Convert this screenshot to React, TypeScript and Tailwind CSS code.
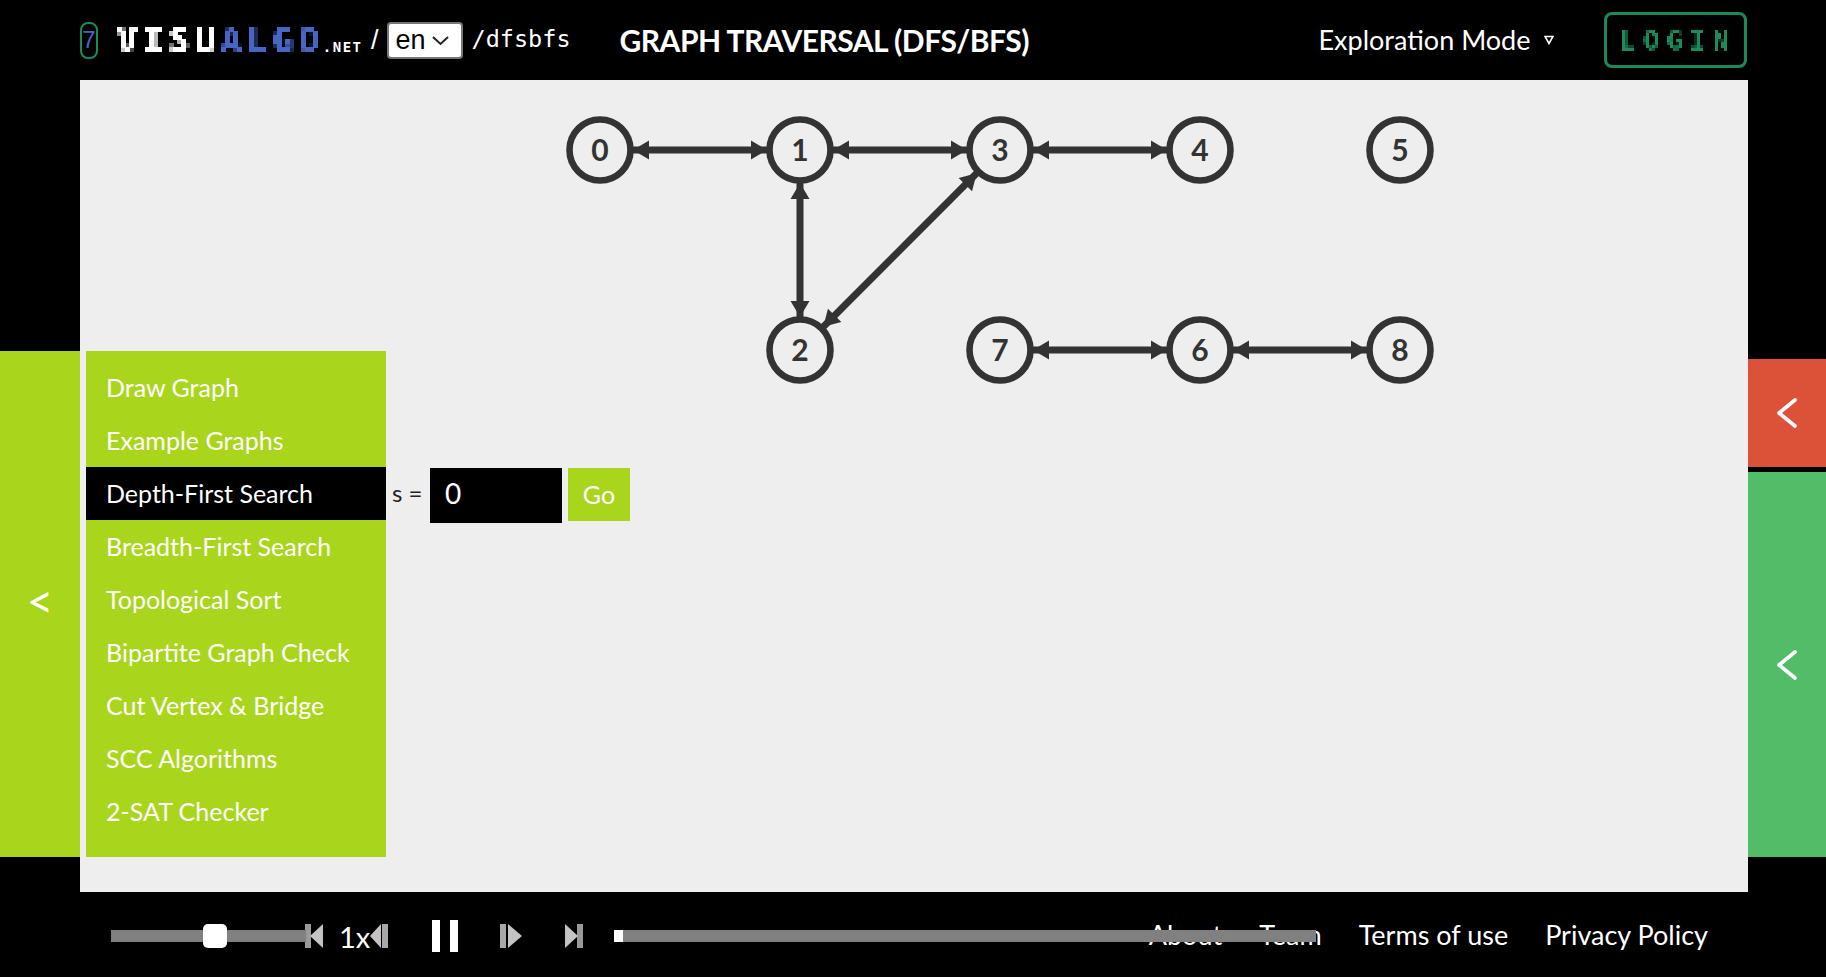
import React from "react";

const SANS = "font-['Lato','Noto_Sans',sans-serif]";
const nodes: [string, number, number][] = [
  ["0", 520, 70], ["1", 720, 70], ["3", 920, 70], ["4", 1120, 70], ["5", 1320, 70],
  ["2", 720, 270], ["7", 920, 270], ["6", 1120, 270], ["8", 1320, 270],
];
const edges: [number, number, number, number][] = [
  [520, 70, 720, 70], [720, 70, 920, 70], [920, 70, 1120, 70],
  [720, 70, 720, 270], [720, 270, 920, 70],
  [920, 270, 1120, 270], [1120, 270, 1320, 270],
];

function Edge({ e }: { e: [number, number, number, number] }) {
  const [x1, y1, x2, y2] = e;
  const len = Math.hypot(x2 - x1, y2 - y1);
  const ux = (x2 - x1) / len, uy = (y2 - y1) / len;
  const px = -uy, py = ux;
  const R = 33, L = 16, W = 9.5;
  const ax = x1 + ux * R, ay = y1 + uy * R, bx = x2 - ux * R, by = y2 - uy * R;
  const head = (tx: number, ty: number, d: number) =>
    `${tx},${ty} ${tx + d * ux * L + px * W},${ty + d * uy * L + py * W} ${tx + d * ux * L - px * W},${ty + d * uy * L - py * W}`;
  return (
    <g fill="#333">
      <line x1={ax} y1={ay} x2={bx} y2={by} stroke="#333" strokeWidth={7} />
      <polygon points={head(ax, ay, 1)} />
      <polygon points={head(bx, by, -1)} />
    </g>
  );
}

const menu = ["Draw Graph", "Example Graphs", "Depth-First Search", "Breadth-First Search", "Topological Sort", "Bipartite Graph Check", "Cut Vertex & Bridge", "SCC Algorithms", "2-SAT Checker"];

function Chevron() {
  return (
    <svg width="20" height="32" viewBox="0 0 20 32" fill="none" stroke="#fff" strokeWidth="3.6" strokeLinecap="round" strokeLinejoin="round">
      <path d="M18 3 L2 16 L18 29" />
    </svg>
  );
}

function Icon({ kind, w, h, cls }: { kind: string; w: number; h: number; cls?: string }) {
  return (
    <svg width={w} height={h} viewBox={`0 0 ${w} ${h}`} className={cls}>
      <defs>
        <filter id="b"><feGaussianBlur stdDeviation="0.5" /></filter>
      </defs>
      <g filter="url(#b)">
        {kind === "start" && (<g><rect x="1" y="0" width="6" height={h} fill="#999" /><polygon points={`19,0 19,${h} 6,${h / 2}`} fill="#c4c4c4" /></g>)}
        {kind === "back" && (<g><rect x="12" y="0" width="6" height={h} fill="#a8a8a8" /><polygon points={`11,0 11,${h} 0,${h / 2}`} fill="#c4c4c4" /></g>)}
        {kind === "fwd" && (<g><rect x="1" y="0" width="6" height={h} fill="#a8a8a8" /><polygon points={`9,0 9,${h} 23,${h / 2}`} fill="#c4c4c4" /></g>)}
        {kind === "end" && (<g><rect x="13" y="0" width="6" height={h} fill="#999" /><polygon points={`1,0 1,${h} 14,${h / 2}`} fill="#c4c4c4" /></g>)}
        {kind === "pause" && (<g><rect x="1" y="0" width="8" height={h} fill="#fff" /><rect x="19" y="0" width="8" height={h} fill="#fff" /></g>)}
      </g>
    </svg>
  );
}

function PixelFilters() {
  return (
    <svg width="0" height="0" className="absolute">
      <filter id="pix" x="0" y="0" width="100%" height="100%" primitiveUnits="userSpaceOnUse">
        <feFlood x="2" y="2" width="1" height="1" />
        <feComposite width="4" height="4" />
        <feTile result="grid" />
        <feComposite in="SourceGraphic" in2="grid" operator="in" />
        <feMorphology operator="dilate" radius="2" />
      </filter>
      <filter id="pix3" x="0" y="0" width="100%" height="100%" primitiveUnits="userSpaceOnUse">
        <feFlood x="1" y="1" width="1" height="1" />
        <feComposite width="3" height="3" />
        <feTile result="grid" />
        <feComposite in="SourceGraphic" in2="grid" operator="in" />
        <feMorphology operator="dilate" radius="1" />
      </filter>
    </svg>
  );
}

export default function App() {
  return (
    <div className={`w-[1826px] h-[977px] bg-black overflow-hidden text-white flex flex-col ${SANS}`}>
      <PixelFilters />
      <header className="h-[80px] flex items-center pl-[80px] shrink-0">
        <div className="w-[18px] h-[37px] border-2 border-[#1a8a5a] rounded-[8px] flex items-center justify-center text-[#4a65c4] text-[24px] font-['Liberation_Sans',sans-serif] font-light leading-none">7</div>
        <div className="ml-[19px] w-[247px] flex items-baseline font-['DejaVu_Sans_Mono',monospace] whitespace-nowrap">
          <span className="font-bold text-[34px] leading-none tracking-[5.5px] [filter:url(#pix)]">VISU</span>
          <span className="font-bold text-[34px] leading-none tracking-[5.5px] text-[#4a65c4] [filter:url(#pix)]">ALGO</span>
          <span className="font-bold text-[14px] tracking-[1.5px] -ml-[2px]">.NET</span>
        </div>
        <span className="ml-[7px] text-[27px] font-['Liberation_Sans',sans-serif]">/</span>
        <div className="relative ml-[8px] w-[76px] h-[37px]">
          <select defaultValue="en" className="w-full h-full appearance-none bg-white text-black rounded-[4px] border-2 border-[#767676] text-[27px] leading-none font-['Liberation_Sans',sans-serif] pl-[7px]">
            <option value="en">en</option>
          </select>
          <svg className="absolute right-[14px] top-[14px] pointer-events-none" width="17" height="10" viewBox="0 0 17 10" fill="none" stroke="#222" strokeWidth="2"><path d="M1 1 L8.5 8 L16 1" /></svg>
        </div>
        <span className="ml-[9px] w-[97px] font-['DejaVu_Sans_Mono',monospace] text-[23.5px] leading-none whitespace-nowrap">/dfsbfs</span>
        <h1 className="ml-[51px] w-[500px] text-[30px] font-bold whitespace-nowrap tracking-[-0.5px]">GRAPH TRAVERSAL (DFS/BFS)</h1>
        <div className="ml-[199px] text-[27px] whitespace-nowrap">Exploration Mode</div>
        <svg className="ml-[14px]" width="10" height="10" viewBox="0 0 10 10" fill="none" stroke="#fff" strokeWidth="1.6"><path d="M1 1.5 H9 L5 8.5 Z" /></svg>
        <div className="ml-[50px] w-[143px] h-[56px] border-[3px] border-[#1a8a5a] rounded-[8px] flex items-center justify-center text-[#1a8a5a] font-['DejaVu_Sans_Mono',monospace] font-bold text-[27px] leading-none">
          <span className="tracking-[7px] pl-[4px] [filter:url(#pix3)]">LOGIN</span>
        </div>
      </header>

      <div className="flex h-[812px] shrink-0">
        <div className="w-[80px] shrink-0 pt-[271px]">
          <div className="h-[506px] bg-[#a9d61c] flex items-center justify-center text-[46px] font-normal pb-[8px]">&lt;</div>
        </div>
        <main className="relative w-[1668px] bg-[#eeeeee] pt-[271px] pl-[6px]">
          <svg className="absolute left-0 top-0" width="1668" height="340" viewBox="0 0 1668 340">
            {edges.map((e, i) => <Edge key={i} e={e} />)}
            {nodes.map(([t, x, y]) => (
              <g key={t}>
                <circle cx={x} cy={y} r={30.5} fill="#eee" stroke="#333" strokeWidth={6.6} />
                <text x={x} y={y + 11} textAnchor="middle" fill="#333" fontSize="30" fontWeight="700" fontFamily="Lato, sans-serif">{t}</text>
              </g>
            ))}
          </svg>
          <div className="flex items-start">
            <nav className="w-[300px] h-[506px] bg-[#a9d61c] pt-[10px]">
              {menu.map((m, i) => (
                <div key={m} className={`h-[53px] flex items-center pl-[20px] text-[25px] whitespace-nowrap ${i === 2 ? "bg-black" : ""}`}>{m}</div>
              ))}
            </nav>
            <div className="mt-[117px] flex items-start text-black">
              <span className="ml-[6px] mt-[11px] w-[32px] text-[24px] leading-[28px] whitespace-nowrap text-[#222]">s =</span>
              <div className="ml-[6px] w-[132px] h-[55px] bg-black text-white text-[28px] pl-[15px] pt-[4px]">0</div>
              <div className="ml-[6px] w-[62px] h-[53px] bg-[#a9d61c] text-white text-[25px] flex items-center justify-center">Go</div>
            </div>
          </div>
        </main>
        <div className="w-[78px] shrink-0 pt-[279px] flex flex-col gap-[5px]">
          <div className="h-[108px] bg-[#dc5239] flex items-center justify-center"><Chevron /></div>
          <div className="h-[385px] bg-[#52bc69] flex items-center justify-center"><Chevron /></div>
        </div>
      </div>

      <footer className="relative flex-1 flex items-center justify-end pr-[118px] pt-[2px] text-[27px] gap-[37px]">
        <span>About</span>
        <span>Team</span>
        <span>Terms of use</span>
        <span>Privacy Policy</span>
        <div className="absolute left-[111px] top-[28px] flex items-center">
          <div className="relative w-[195px] h-[12px] bg-[#808080]">
            <div className="absolute left-[92px] -top-[6px] w-[24px] h-[24px] bg-white rounded-[5px]" />
          </div>
          <Icon kind="start" w={20} h={24} cls="-ml-[2px]" />
          <span className="ml-[15px] w-[31px] text-[29px] leading-none">1x</span>
          <Icon kind="back" w={19} h={24} />
          <Icon kind="pause" w={28} h={32} cls="ml-[42px]" />
          <Icon kind="fwd" w={24} h={24} cls="ml-[40px]" />
          <Icon kind="end" w={20} h={24} cls="ml-[41px]" />
          <div className="ml-[30px] w-[9px] h-[12px] bg-white" />
          <div className="w-[693px] h-[12px] bg-[#808080]" />
        </div>
      </footer>
    </div>
  );
}
